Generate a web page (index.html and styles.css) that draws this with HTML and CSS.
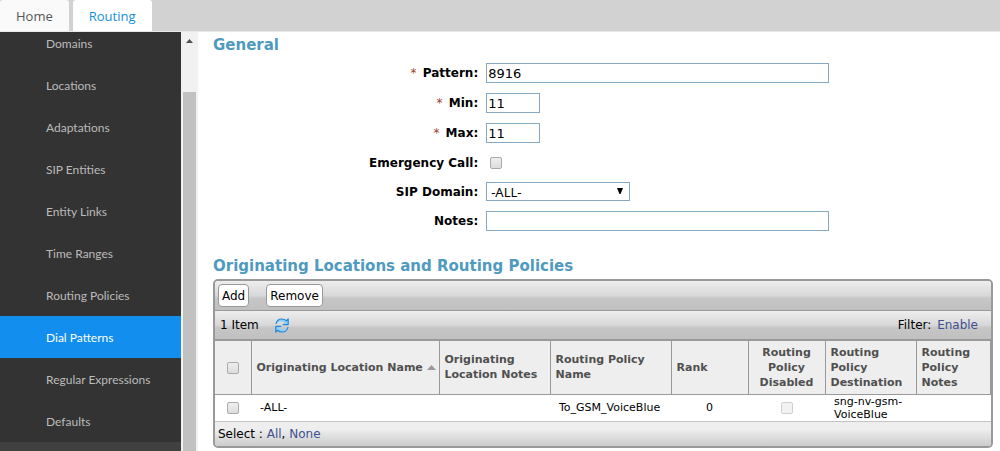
FILE: index.html
```html
<!DOCTYPE html>
<html lang="en">
<head>
<meta charset="utf-8">
<title>Dial Patterns</title>
<link rel="stylesheet" href="styles.css">
</head>
<body>
<header class="tabs">
  <a class="tab" href="#home">Home</a>
  <a class="tab tab-active" href="#routing">Routing</a>
</header>
<div class="body">
  <nav class="sidebar">
    <div class="menu">
      <a class="item" href="#domains">Domains</a>
      <a class="item" href="#locations">Locations</a>
      <a class="item" href="#adaptations">Adaptations</a>
      <a class="item" href="#entities">SIP Entities</a>
      <a class="item" href="#links">Entity Links</a>
      <a class="item" href="#ranges">Time Ranges</a>
      <a class="item" href="#policies">Routing Policies</a>
      <a class="item item-active" href="#patterns">Dial Patterns</a>
      <a class="item" href="#regex">Regular Expressions</a>
      <a class="item" href="#defaults">Defaults</a>
    </div>
  </nav>
  <div class="scrollbar">
    <svg class="scroll-up" width="7" height="4" viewBox="0 0 7 4"><path d="M0 4 3.500 0 7 4z" fill="#505050"/></svg>
    <div class="thumb"></div>
  </div>
  <main class="content">
    <h2 class="title">General</h2>
    <form class="form">
      <label class="label" for="pattern"><span class="req">*</span> Pattern:</label>
      <input class="text" id="pattern" type="text" value="8916">
      <label class="label" for="min"><span class="req">*</span> Min:</label>
      <input class="text text-short" id="min" type="text" value="11">
      <label class="label" for="max"><span class="req">*</span> Max:</label>
      <input class="text text-short" id="max" type="text" value="11">
      <label class="label" for="emergency">Emergency Call:</label>
      <input class="check check-form" id="emergency" type="checkbox">
      <label class="label" for="domain">SIP Domain:</label>
      <div class="select-box">
        <select class="select" id="domain"><option>-ALL-</option></select>
        <svg class="select-arrow" width="6" height="6" viewBox="0 0 6 6"><path d="M0 0H6L3.500 6H2.500z" fill="#000"/></svg>
      </div>
      <label class="label" for="notes">Notes:</label>
      <input class="text" id="notes" type="text">
    </form>
    <h2 class="title title-list">Originating Locations and Routing Policies</h2>
    <section class="panel">
      <div class="bar actions">
        <button class="button" type="button">Add</button>
        <button class="button" type="button">Remove</button>
      </div>
      <div class="bar status">
        <span>1 Item</span>
        <button class="refresh" type="button" aria-label="Refresh">
          <svg width="16" height="15" viewBox="0 0 16 15">
            <path d="M2 6C2.600 2.800 5.200 1 8 1c2 0 3.200.6 4.400 1.700L14.200 1V6.600H8.700L10.500 4.700C8.300 3 4.600 3.200 2 6z" fill="#8ed0fa"/>
            <path d="M2 6C2.600 2.800 5.200 1 8 1c2 0 3.200.6 4.400 1.700L14.200 1V6.600H8.700" fill="none" stroke="#2187d6" stroke-width="1.200" stroke-linejoin="round"/>
            <path d="M14 9C13.400 12.200 10.800 14 8 14c-2 0-3.200-.6-4.400-1.700L1.800 14V8.400H7.300L5.500 10.300C7.700 12 11.400 11.800 14 9z" fill="#8ed0fa"/>
            <path d="M14 9C13.400 12.200 10.800 14 8 14c-2 0-3.200-.6-4.400-1.700L1.800 14V8.400H7.300" fill="none" stroke="#2187d6" stroke-width="1.200" stroke-linejoin="round"/>
          </svg>
        </button>
        <span class="filter">Filter: <a class="link" href="#filter">Enable</a></span>
      </div>
      <table class="table">
        <colgroup><col class="c-check"><col class="c-name"><col class="c-notes"><col class="c-policy"><col class="c-rank"><col class="c-disabled"><col class="c-dest"><col class="c-pnotes"></colgroup>
        <thead>
          <tr>
            <th class="center"><input class="check" type="checkbox" aria-label="Select all rows"></th>
            <th class="sorted">Originating Location Name <svg class="sort" width="9" height="5" viewBox="0 0 9 5"><path d="M0 5 4.500 0 9 5z" fill="#999"/></svg></th>
            <th>Originating Location Notes</th>
            <th>Routing Policy Name</th>
            <th>Rank</th>
            <th class="center">Routing Policy Disabled</th>
            <th>Routing Policy Destination</th>
            <th>Routing Policy Notes</th>
          </tr>
        </thead>
        <tbody>
          <tr>
            <td class="center"><input class="check" type="checkbox" aria-label="Select -ALL-"></td>
            <td>-ALL-</td>
            <td></td>
            <td>To_GSM_VoiceBlue</td>
            <td class="center">0</td>
            <td class="center"><input class="check" type="checkbox" aria-label="Routing policy disabled" disabled></td>
            <td>sng-nv-gsm-VoiceBlue</td>
            <td></td>
          </tr>
        </tbody>
      </table>
      <div class="footer">Select : <a class="link" href="#all">All</a>, <a class="link" href="#none">None</a></div>
    </section>
  </main>
</div>
</body>
</html>
```
FILE: styles.css
```css
* { box-sizing: border-box; }
body {
  margin: 0;
  height: 100vh;
  display: flex;
  flex-direction: column;
  overflow: hidden;
  background: #fff;
  color: #000;
  font-family: "DejaVu Sans", sans-serif;
  font-size: 12px;
}
a { text-decoration: none; }
.tabs {
  display: flex;
  flex: none;
  gap: 4px;
  height: 32px;
  background: #d2d2d2;
  border-bottom: 1px solid #e8e8e8;
}
.tab {
  padding: 0 16px;
  background: #fafafa;
  border-radius: 3px 3px 0 0;
  color: #555;
  font-family: "Open Sans", sans-serif;
  font-size: 13px;
  line-height: 32px;
}
.tab-active { background: #fff; color: #148fe0; }
.body { display: flex; flex: 1; min-height: 0; }
.sidebar { width: 181px; flex: none; overflow: hidden; background: #404040; }
.menu { margin-top: -10px; background: #333; }
.item {
  display: block;
  padding: 2px 0 0 46px;
  color: #bbb;
  font-family: Lato, sans-serif;
  line-height: 40px;
}
.item-active { background: #118eee; color: #fff; }
.scrollbar {
  display: flex;
  flex-direction: column;
  align-items: center;
  flex: none;
  width: 17px;
  background: #f1f1f1;
}
.scroll-up { flex: none; margin: 7px 0 49px; }
.thumb { flex: 1; width: 13px; background: #c1c1c1; }
.content { flex: 1; min-width: 0; padding: 0 7px 0 15px; }
.title {
  margin: 4px 0 0;
  color: #4f9abf;
  font: bold 15px/18px "DejaVu Sans", sans-serif;
}
.title-list { margin-top: 26px; }
.form {
  display: grid;
  grid-template-columns: 34% 44%;
  grid-template-rows: repeat(3, 20px) repeat(2, 19px) 20px;
  gap: 10px 8px;
  align-items: center;
  margin-top: 9px;
}
.label { text-align: right; font-weight: bold; line-height: 18px; }
.req { margin-right: 2px; color: #a0402c; font-weight: normal; }
.text, .select {
  width: 100%;
  height: 20px;
  margin: 0;
  border: 1px solid #86a9c1;
  border-radius: 0;
  background: #fff;
  color: #000;
}
.text { padding: 0 1px; font: 13px "DejaVu Sans", sans-serif; }
.text-short { width: 54px; }
.select-box { position: relative; width: 144px; }
.select { display: block; height: 19px; padding: 0 4px; appearance: none; font: 13px "Noto Sans", sans-serif; }
.select-arrow { position: absolute; right: 7px; top: 6px; pointer-events: none; }
.check {
  appearance: none;
  display: inline-block;
  width: 12px;
  height: 12px;
  margin: 0;
  vertical-align: middle;
  border: 1px solid #aaa;
  border-radius: 2px;
  background: linear-gradient(#eee, #ddd);
}
.check:disabled { border-color: #d0d0d0; background: #f2f2f2; }
.check-form { margin-left: 4px; }
.panel {
  margin-top: 4px;
  border: 2px solid #999;
  border-radius: 5px;
  overflow: hidden;
}
.bar {
  display: flex;
  align-items: center;
  background: linear-gradient(#eee, #d8d8d8 50%, #c6c6c6 60%, #c0c0c0);
}
.actions { gap: 17px; height: 30px; padding: 0 3px; border-bottom: 1px solid #999; }
.button {
  height: 23px;
  padding: 0 3px;
  border: 1px solid #999;
  border-radius: 4px;
  background: #fff;
  color: #000;
  font: 12px "DejaVu Sans", sans-serif;
}
.status { gap: 15px; height: 30px; padding: 0 13px 0 5px; border-bottom: 2px solid #999; }
.refresh { display: flex; padding: 0; border: 0; background: none; }
.filter { margin-left: auto; }
.filter .link { margin-left: 2px; }
.link { color: #3f4f90; }
.table { width: 100%; table-layout: fixed; border-collapse: collapse; }
.table th, .table td { padding: 0 5px; text-align: left; }
.table th {
  height: 53px;
  border-right: 1px solid #999;
  border-bottom: 1px solid #999;
  background: #eee;
  color: #505050;
  font: bold 11px/15px "DejaVu Sans", sans-serif;
}
.table td { height: 27px; padding: 0 9px; font: 11px/13px "DejaVu Sans", sans-serif; }
.table .center { text-align: center; }
.table .sorted { white-space: nowrap; }
.sort { vertical-align: middle; }
.c-check { width: 36px; }
.c-name { width: 188px; }
.c-notes { width: 111px; }
.c-policy { width: 121px; }
.c-rank { width: 77px; }
.c-disabled { width: 77px; }
.c-dest { width: 91px; }
.footer {
  padding: 0 3px;
  border-top: 1px solid #c4c4c4;
  background: linear-gradient(#eee 30%, #ccc);
  line-height: 24px;
}
```
